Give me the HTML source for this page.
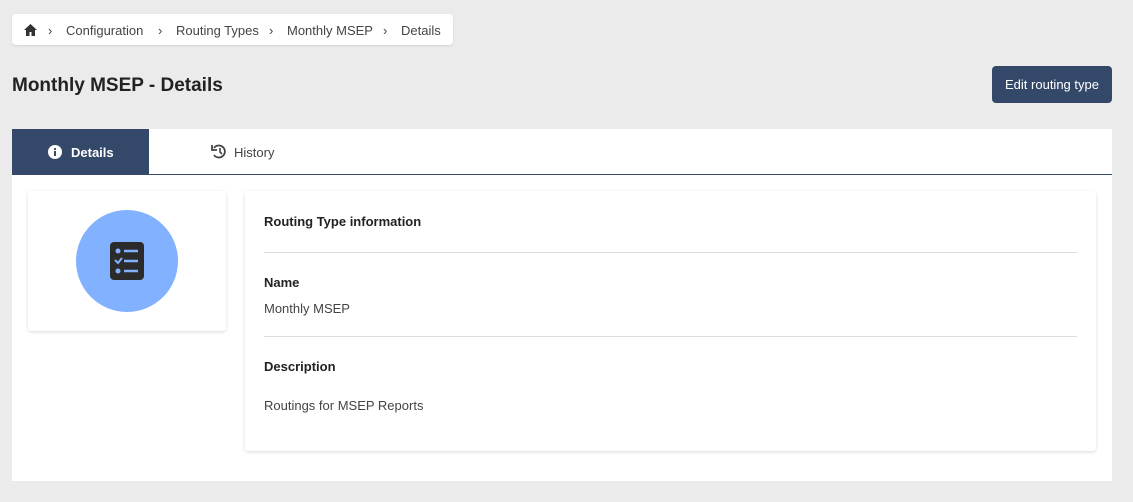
<!DOCTYPE html>
<html><head><style>
body{margin:0;width:1133px;height:502px;background:#ebebeb;font-family:"Liberation Sans",sans-serif;color:#333;position:relative;overflow:hidden}
.abs{position:absolute}
.bc{left:12px;top:14px;width:441px;height:31px;background:#fff;border-radius:4px;box-shadow:0 1px 2px rgba(0,0,0,.1);font-size:13px;color:#444}
.bc span{position:absolute;top:9px}
h1{position:absolute;left:12px;top:75px;margin:0;font-size:19px;font-weight:bold;color:#222}
.btn{left:992px;top:66px;width:120px;height:37px;background:#34486a;color:#fff;border-radius:4px;font-size:13px;text-align:center;line-height:37px}
.main{left:12px;top:129px;width:1100px;height:352px;background:#fff}
.tab{left:12px;top:129px;width:137px;height:45px;background:#34486a;color:#fff;font-size:13px;font-weight:bold}
.line{left:12px;top:174px;width:1100px;height:1px;background:#34486a}
.card{background:#fff;box-shadow:0 1px 3px rgba(0,0,0,.15);border-radius:3px}
.lbl{font-size:13px;font-weight:bold;color:#222}
.val{font-size:13px;color:#444}
.hr{left:264px;width:813px;height:1px;background:#ddd}
</style></head><body>
<div class="abs bc">
<svg class="abs" style="left:12px;top:10px" width="13" height="12" viewBox="0 0 13 12"><path d="M6.5 0L0 6h2v6h3.5V8h2v4H11V6h2z" fill="#333"/></svg>
<span style="left:36px">›</span><span style="left:54px">Configuration</span>
<span style="left:146px">›</span><span style="left:164px">Routing Types</span>
<span style="left:257px">›</span><span style="left:275px">Monthly MSEP</span>
<span style="left:371px">›</span><span style="left:389px">Details</span>
</div>
<h1>Monthly MSEP - Details</h1>
<div class="abs btn">Edit routing type</div>
<div class="abs main"></div>
<div class="abs tab"><svg class="abs" style="left:36px;top:16px" width="14" height="14"><circle cx="7" cy="7" r="7" fill="#fff"/><rect x="6" y="6" width="2" height="5" fill="#34486a"/><circle cx="7" cy="4" r="1.1" fill="#34486a"/></svg><span class="abs" style="left:59px;top:16px">Details</span></div>
<svg class="abs" style="left:211px;top:144px" width="16" height="15" viewBox="0 0 16 15"><path d="M3 4A6 6 0 1 1 3 11" fill="none" stroke="#444" stroke-width="1.8"/><path d="M1 1v5h5" fill="none" stroke="#444" stroke-width="1.8"/><path d="M9 4v4l2 2" fill="none" stroke="#444" stroke-width="1.6"/></svg>
<span class="abs" style="left:234px;top:145px;font-size:13px;color:#444">History</span>
<div class="abs line"></div>
<div class="abs card" style="left:28px;top:191px;width:198px;height:140px"></div>
<div class="abs" style="left:76px;top:210px;width:102px;height:102px;border-radius:50%;background:#82b1ff"></div>
<svg class="abs" style="left:110px;top:242px" width="34" height="38" viewBox="0 0 34 38"><rect width="34" height="38" rx="4" fill="#2b2b2b"/><circle cx="8" cy="9" r="2.5" fill="#82b1ff"/><circle cx="8" cy="29" r="2.5" fill="#82b1ff"/><path d="M5 18l3 3 4-5" stroke="#82b1ff" stroke-width="2" fill="none"/><path d="M14 9h14M14 19h14M14 29h14" stroke="#82b1ff" stroke-width="2.4"/></svg>
<div class="abs card" style="left:245px;top:191px;width:851px;height:260px"></div>
<div class="abs lbl" style="left:264px;top:214px">Routing Type information</div>
<div class="abs hr" style="top:252px"></div>
<div class="abs lbl" style="left:264px;top:275px">Name</div>
<div class="abs val" style="left:264px;top:301px">Monthly MSEP</div>
<div class="abs hr" style="top:336px"></div>
<div class="abs lbl" style="left:264px;top:359px">Description</div>
<div class="abs val" style="left:264px;top:398px">Routings for MSEP Reports</div>
</body></html>
